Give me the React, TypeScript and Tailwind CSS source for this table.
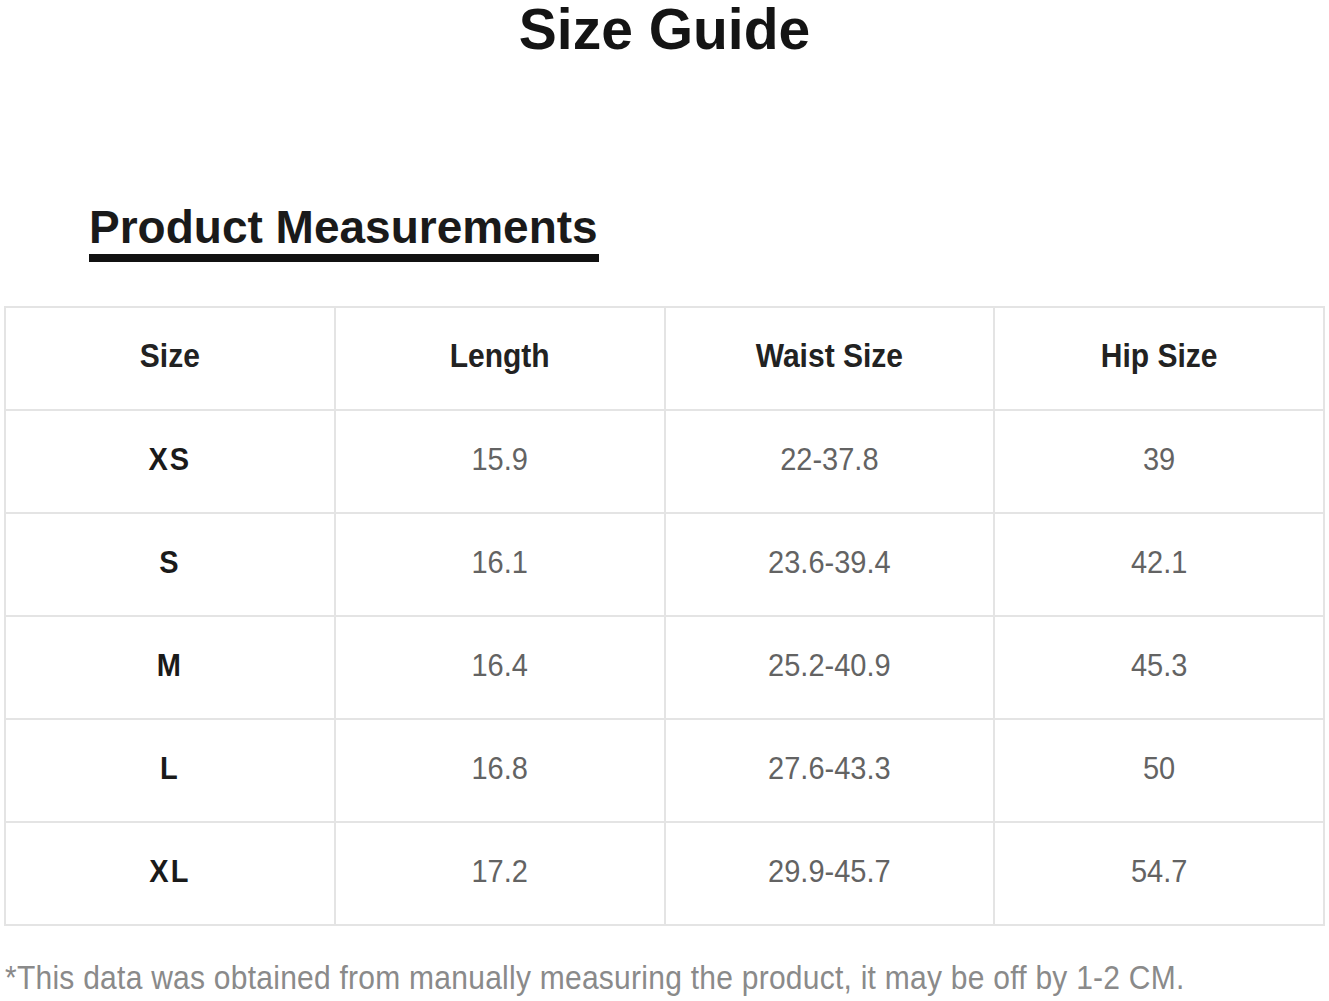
import React from "react";

const rows = [
  ["XS", "15.9", "22-37.8", "39"],
  ["S", "16.1", "23.6-39.4", "42.1"],
  ["M", "16.4", "25.2-40.9", "45.3"],
  ["L", "16.8", "27.6-43.3", "50"],
  ["XL", "17.2", "29.9-45.7", "54.7"],
];

const headers = ["Size", "Length", "Waist Size", "Hip Size"];

export default function App() {
  return (
    <div
      className="w-[1329px] h-[1001px] bg-white overflow-hidden"
      style={{ fontFamily: '"Liberation Sans", Arial, sans-serif' }}
    >
      <h1 className="text-center text-[57px] leading-[1.05] font-bold text-[#141414]">
        Size Guide
      </h1>
      <div className="mt-[144px] pl-[89px]">
        <h2 className="inline-block text-[46px] leading-none font-bold text-[#1a1a1a] pb-[4px] pr-[1px] border-b-[8px] border-[#111]">
          Product Measurements
        </h2>
      </div>
      <div className="mt-[44px] ml-[4px] w-[1321px]">
        <table className="w-full border-collapse table-fixed">
          <thead>
            <tr className="h-[103px]">
              {headers.map((h) => (
                <th
                  key={h}
                  className="border-2 border-[#e4e4e4] text-[30px] font-bold text-[#222] text-center align-middle pb-[6px]"
                >
                  <span className="inline-block scale-y-[1.1]">{h}</span>
                </th>
              ))}
            </tr>
          </thead>
          <tbody>
            {rows.map((r) => (
              <tr key={r[0]} className="h-[103px]">
                {r.map((c, i) => (
                  <td
                    key={i}
                    className={
                      i === 0
                        ? "border-2 border-[#e4e4e4] text-center align-middle text-[29px] font-bold text-[#1a1a1a] tracking-[2px] pb-[2px]"
                        : "border-2 border-[#e4e4e4] text-center align-middle text-[29px] text-[#636363] pb-[2px]"
                    }
                  >
                    <span className="inline-block scale-y-[1.05]">{c}</span>
                  </td>
                ))}
              </tr>
            ))}
          </tbody>
        </table>
      </div>
      <p className="mt-[37px] ml-[5px] text-[30px] leading-none text-[#8a8a8a] whitespace-nowrap tracking-[0.25px] scale-y-[1.08]">
        *This data was obtained from manually measuring the product, it may be off by 1-2 CM.
      </p>
    </div>
  );
}
